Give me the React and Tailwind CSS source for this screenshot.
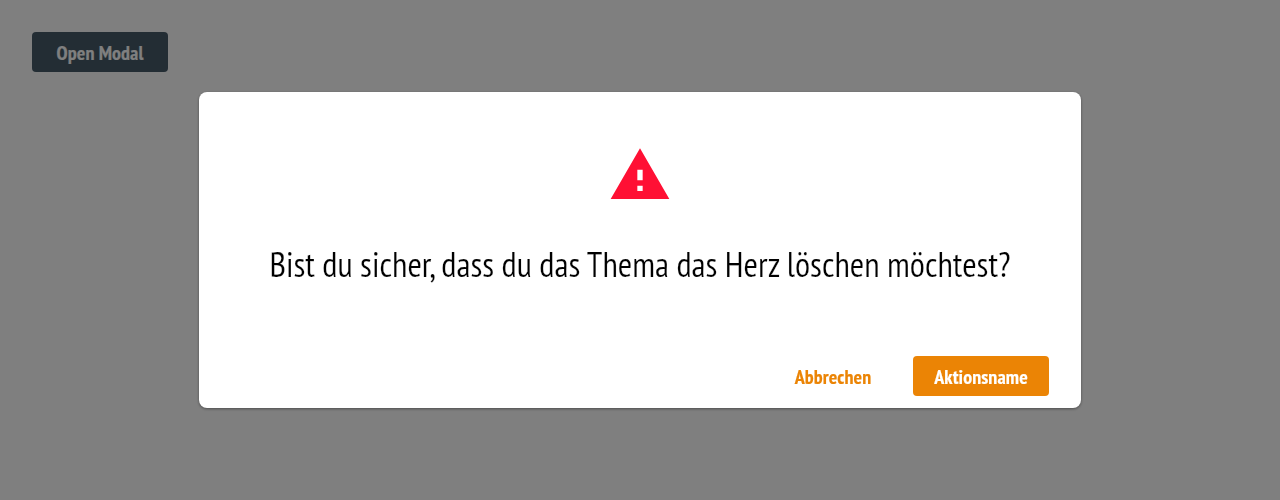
import React from "react";

const font = "font-['PT_Sans_Narrow','Open_Sans','Noto_Sans',sans-serif] [font-stretch:75%]";
const label = "whitespace-nowrap pt-px tracking-[0.1px] [-webkit-text-stroke:0.15px_currentColor]";

function WarningIcon() {
  return (
    <svg className="h-16 w-16" viewBox="0 0 24 24" fill="#ff1034" aria-hidden="true">
      <path d="M1 21h22L12 2 1 21zm12-3h-2v-2h2v2zm0-4h-2v-4h2v4z" />
    </svg>
  );
}

export default function App() {
  return (
    <div className={`h-[500px] w-full overflow-hidden bg-white p-8 ${font}`}>
      <button className="flex h-10 w-[136px] items-center justify-center rounded bg-[#475a69] text-[20px] font-bold text-white">
        <span className={label}>Open Modal</span>
      </button>
      <div className="fixed inset-0 flex items-center justify-center bg-black/50">
        <div role="dialog" className="flex h-[316px] w-[882px] flex-col rounded-lg bg-white px-8 pt-12 pb-3 shadow-[0_1px_3px_rgba(0,0,0,0.4)]">
          <div className="flex justify-center pt-[3px]">
            <WarningIcon />
          </div>
          <h1 className="mt-8 flex justify-center text-[35px] leading-[50px] font-normal text-black [-webkit-text-stroke:0.2px_white]">
            <span className="whitespace-nowrap">Bist du sicher, dass du das Thema das Herz löschen möchtest?</span>
          </h1>
          <div className="mt-auto flex justify-end gap-3 text-[20px] font-bold">
            <button className="flex h-10 w-[136px] items-center justify-center rounded text-[#eb8405]">
              <span className={label}>Abbrechen</span>
            </button>
            <button className="flex h-10 w-[136px] items-center justify-center rounded bg-[#eb8405] text-white">
              <span className={label}>Aktionsname</span>
            </button>
          </div>
        </div>
      </div>
    </div>
  );
}
